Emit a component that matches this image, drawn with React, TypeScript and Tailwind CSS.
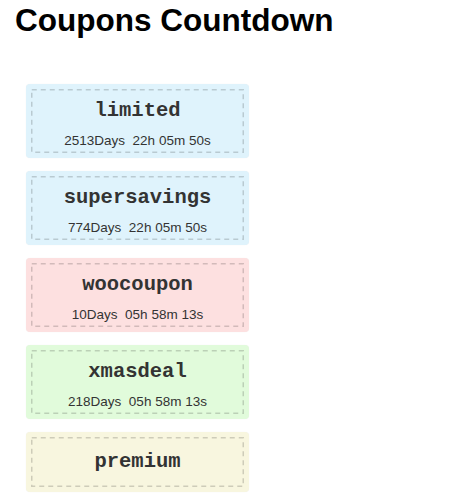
const coupons = [
  { code: "limited", left: "2513Days  22h 05m 50s", tone: "bg-[#dff3fc]" },
  { code: "supersavings", left: "774Days  22h 05m 50s", tone: "bg-[#dff3fc]" },
  { code: "woocoupon", left: "10Days  05h 58m 13s", tone: "bg-[#fde0e0]" },
  { code: "xmasdeal", left: "218Days  05h 58m 13s", tone: "bg-[#e1fbdb]" },
  { code: "premium", left: "", tone: "bg-[#f8f6df]" },
];

function DashFrame() {
  return (
    <svg className="pointer-events-none absolute inset-0 h-full w-full" preserveAspectRatio="none">
      <rect
        x="0.75"
        y="0.75"
        width="calc(100% - 1.5px)"
        height="calc(100% - 1.5px)"
        fill="none"
        stroke="rgba(0,0,0,0.17)"
        strokeWidth="1.5"
        strokeDasharray="5 4"
      />
    </svg>
  );
}

function Coupon({ code, left, tone }: { code: string; left: string; tone: string }) {
  return (
    <div className={`w-[223px] rounded-[4px] p-[5px] shadow-[0_0_1px_rgba(0,0,0,0.08)] ${tone}`}>
      <div
        className={`relative text-center text-[#333] ${
          left ? "pt-[10px] pb-[3px]" : "py-[13px]"
        }`}
      >
        <DashFrame />
        <div className="font-['Liberation_Mono','Courier_New',monospace] text-[20.5px] leading-[24px] font-bold">
          {code}
        </div>
        {left && (
          <div className="mt-[9px] whitespace-pre font-['Liberation_Sans',Arial,sans-serif] text-[13.5px] leading-[18px]">
            {left}
          </div>
        )}
      </div>
    </div>
  );
}

export default function App() {
  return (
    <div className="h-[494px] w-[470px] overflow-hidden bg-white">
      <h1 className="pt-[4px] pl-[15px] font-['Liberation_Sans',Arial,sans-serif] text-[31.5px] leading-[32px] font-bold text-black">
        Coupons Countdown
      </h1>
      <div className="mt-[48px] ml-[26px] flex flex-col gap-[13px]">
        {coupons.map((c) => (
          <Coupon key={c.code} {...c} />
        ))}
      </div>
    </div>
  );
}
